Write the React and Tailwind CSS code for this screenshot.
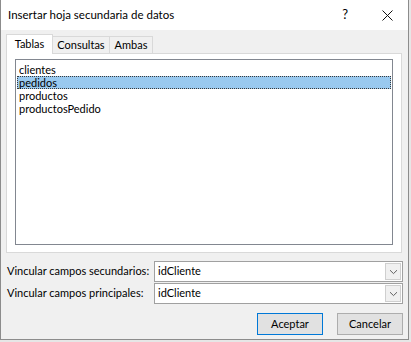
import React from "react";

function Chevron() {
  return (
    <svg width="9" height="6" viewBox="0 0 9 6" fill="none">
      <path d="M1 1.2 L4.5 4.6 L8 1.2" stroke="#606060" strokeWidth="1" />
    </svg>
  );
}

function Combo({ value }) {
  return (
    <div className="flex h-[21px] w-[249px] items-center border border-[#a0a0a0] bg-white pl-[3px]">
      <span className="flex-1 text-black">{value}</span>
      <div className="mr-[1px] flex h-[17px] w-[16px] items-center justify-center border border-[#cfcfcf] bg-[#f0f0f0]">
        <Chevron />
      </div>
    </div>
  );
}

const tables = ["clientes", "pedidos", "productos", "productosPedido"];

export default function App() {
  return (
    <div className="h-[342px] w-[411px] bg-[#e6e6e6] font-['Lato',sans-serif] text-[11px]">
      <div className="flex h-[340px] w-[409px] flex-col border-x border-b border-[#8c8c8c] bg-[#f0f0f0] text-black">
        <div className="flex h-[30px] items-center bg-white pl-[7px]">
          <span className="flex-1 text-[11.5px]">Insertar hoja secundaria de datos</span>
          <span className="mr-[34px] text-[13px]">?</span>
          <svg width="11" height="11" viewBox="0 0 11 11" className="mr-[15px]">
            <path d="M0.5 0.5 L10.5 10.5 M10.5 0.5 L0.5 10.5" stroke="#111" strokeWidth="1" />
          </svg>
        </div>

        <div className="ml-[5px] mt-[4px] flex h-[19px] items-end whitespace-nowrap">
          <div className="relative z-10 -mb-px flex h-[20px] w-[47px] items-center justify-center border-x border-t border-[#d9d9d9] bg-white">
            Tablas
          </div>
          <div className="flex h-[17px] w-[57px] items-center justify-center border-r border-t border-[#d9d9d9]">
            Consultas
          </div>
          <div className="flex h-[17px] w-[43px] items-center justify-center border-r border-t border-[#d9d9d9]">
            Ambas
          </div>
        </div>

        <div className="ml-[5px] flex h-[200px] w-[396px] flex-col border border-[#d9d9d9] bg-white px-[8px] pb-[7px] pt-[5px]">
          <div className="flex-1 border border-[#828790] bg-white px-[1px] pt-[3px]">
            {tables.map((t) =>
              t === "pedidos" ? (
                <div
                  key={t}
                  className="h-[13px] border border-dotted border-[#3a3a3a] bg-[#99c9ef] pl-[1px] leading-[11px]"
                >
                  {t}
                </div>
              ) : (
                <div key={t} className="h-[13px] pl-[2px] leading-[13px]">
                  {t}
                </div>
              )
            )}
          </div>
        </div>

        <div className="ml-[6px] mt-[8px] flex flex-col gap-[1px] whitespace-nowrap">
          <div className="flex items-center">
            <span className="w-[147px]">Vincular campos secundarios:</span>
            <Combo value="idCliente" />
          </div>
          <div className="flex items-center">
            <span className="w-[147px]">Vincular campos principales:</span>
            <Combo value="idCliente" />
          </div>
        </div>

        <div className="mr-[5px] mt-[9px] flex justify-end gap-[14px]">
          <button className="h-[22px] w-[66px] border border-[#0078d7] bg-[#e1e1e1]">Aceptar</button>
          <button className="h-[22px] w-[66px] border border-[#adadad] bg-[#e1e1e1]">Cancelar</button>
        </div>
      </div>
    </div>
  );
}
